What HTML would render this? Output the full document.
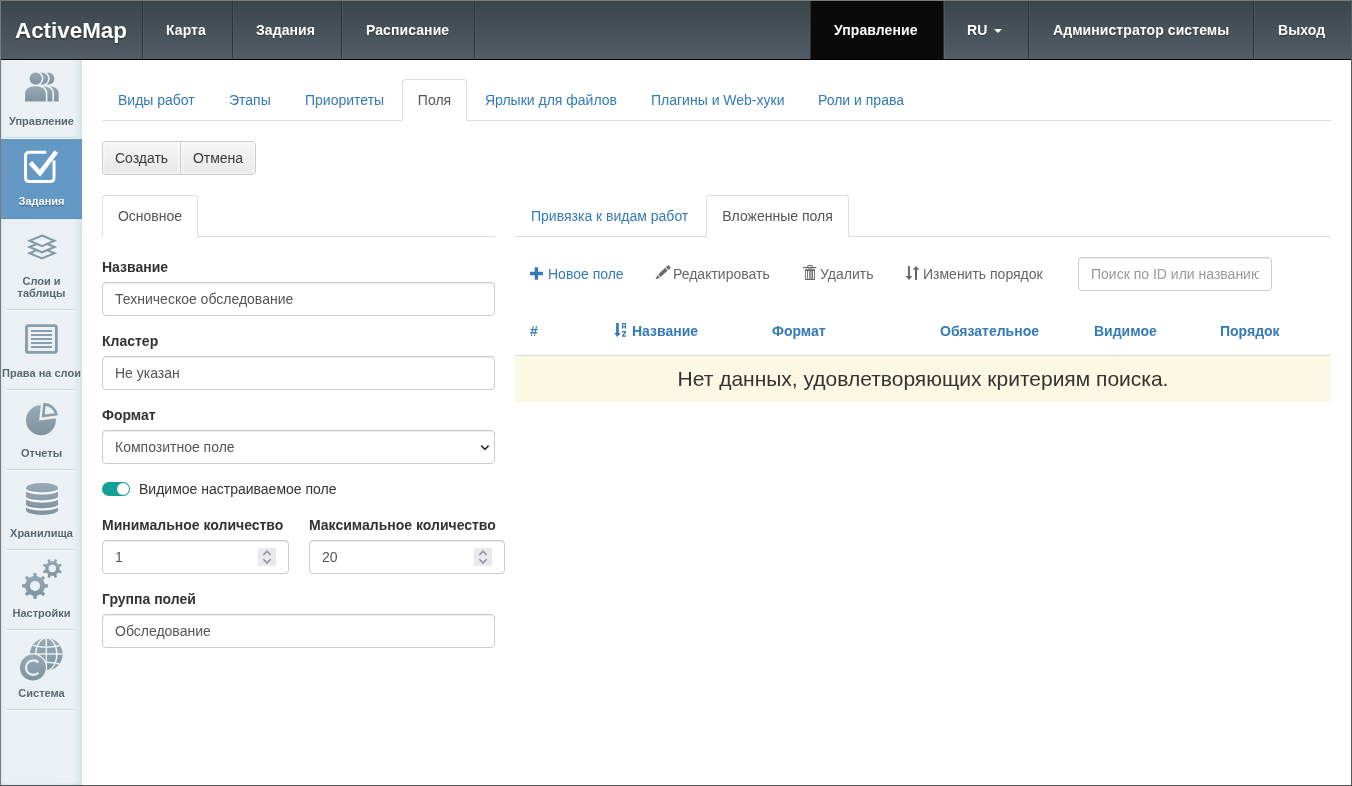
<!DOCTYPE html>
<html><head><meta charset="utf-8">
<style>
*{box-sizing:border-box;margin:0;padding:0}
html,body{width:1352px;height:786px;overflow:hidden;background:#fff}
body{font-family:"Liberation Sans",sans-serif;font-size:14px;color:#333;position:relative;will-change:transform}
.frame{position:absolute;left:0;top:0;width:1352px;height:786px;border-top:1px solid #7a7a7a;border-left:1px solid #7a7a7a;border-right:1px solid #5a5a5a;border-bottom:1px solid #5a5a5a;z-index:50;pointer-events:none}
.abs{position:absolute}
/* navbar */
.nav{position:absolute;left:1px;top:1px;width:1350px;height:59px;background:linear-gradient(#3a454c,#525d65);border-bottom:1px solid #000}
.nav .it{position:absolute;top:0;height:58px;line-height:58px;color:#fff;font-weight:bold;font-size:14px;white-space:nowrap;letter-spacing:0.08px;text-shadow:0 1px 1px rgba(0,0,0,.35)}
.nav .dv{position:absolute;top:0;width:1px;height:58px;background:#2c3439;box-shadow:1px 0 0 rgba(255,255,255,.06)}
.logo{position:absolute;left:14px;top:1px;height:58px;line-height:58px;color:#fff;font-weight:bold;font-size:22.4px;text-shadow:0 1px 2px rgba(0,0,0,.6)}
/* sidebar */
.side{position:absolute;left:1px;top:60px;width:81px;height:726px;background:linear-gradient(90deg,#dfe9ef 0,#eaf0f4 4px,#ebf1f4 72px,#d6e4ec 81px);box-shadow:inset 0 -3px 3px -2px rgba(110,155,190,.35)}
.si{position:absolute;left:1px;width:81px;text-align:center;color:#55656f;font-weight:bold;font-size:11px;line-height:12px}
.sep{position:absolute;left:6px;width:70px;height:1px;background:#c6d6e0;box-shadow:0 1px 0 #fbfcfd}
.si{text-shadow:0 1px 0 #fff}
.si.act{color:#fff;text-shadow:0 1px 1px #2d5a80}
/* content */
.tabs{position:absolute}
.tline{position:absolute;height:1px;background:#ddd}
.tab{position:absolute;color:#337ab7;font-size:14px}
.atab{position:absolute;border:1px solid #ddd;border-bottom-color:#fff;border-radius:4px 4px 0 0;background:#fff;color:#555;text-align:center}
.btn{position:absolute;height:34px;line-height:32px;border:1px solid #ccc;background:linear-gradient(#f6f6f6,#e8e8e8);box-shadow:inset 0 0 4px #fff;color:#3a3a3a;text-align:center;font-size:14px}
.lbl{position:absolute;font-weight:bold;font-size:14px;color:#333}
.inp{position:absolute;height:34px;border:1px solid #ccc;border-radius:4px;background:#fff;color:#555;font-size:14px;line-height:32px;padding-left:12px;box-shadow:inset 0 1px 1px rgba(0,0,0,.075)}
.th{position:absolute;top:322px;color:#337ab7;font-weight:bold;font-size:14px;line-height:18px}
.tool{position:absolute;top:265px;font-size:14px;line-height:18px;color:#666}
</style></head><body>
<div class="frame"></div>

<div class="nav">
  <div class="logo">ActiveMap</div>
  <div class="dv" style="left:141px"></div>
  <div class="it" style="left:165px">Карта</div>
  <div class="dv" style="left:231px"></div>
  <div class="it" style="left:255px">Задания</div>
  <div class="dv" style="left:340px"></div>
  <div class="it" style="left:365px">Расписание</div>
  <div class="dv" style="left:473px"></div>

  <div class="dv" style="left:809px"></div>
  <div class="abs" style="left:810px;top:0;width:132px;height:58px;background:#0a0a0a"></div>
  <div class="it" style="left:833px">Управление</div>
  <div class="dv" style="left:942px"></div>
  <div class="it" style="left:966px">RU <span style="display:inline-block;width:0;height:0;border-left:4px solid transparent;border-right:4px solid transparent;border-top:4px solid #fff;vertical-align:middle;margin-left:3px"></span></div>
  <div class="dv" style="left:1027px"></div>
  <div class="it" style="left:1052px">Администратор системы</div>
  <div class="dv" style="left:1252px"></div>
  <div class="it" style="left:1277px">Выход</div>
</div>

<div class="side"></div>
<div class="sep" style="top:137px"></div>
<div class="abs" style="left:1px;top:139px;width:81px;height:80px;background:#6399c4;border-bottom:1px solid #5a8fba"></div>
<div class="sep" style="top:309px"></div>
<div class="sep" style="top:389px"></div>
<div class="sep" style="top:469px"></div>
<div class="sep" style="top:549px"></div>
<div class="sep" style="top:629px"></div>
<div class="sep" style="top:709px"></div>
<div class="si" style="top:115px">Управление</div>
<div class="si act" style="top:195px">Задания</div>
<div class="si" style="top:275px">Слои и<br>таблицы</div>
<div class="si" style="top:367px">Права на слои</div>
<div class="si" style="top:447px">Отчеты</div>
<div class="si" style="top:527px">Хранилища</div>
<div class="si" style="top:607px">Настройки</div>
<div class="si" style="top:687px">Система</div>
<svg class="abs" style="left:0;top:0" width="90" height="786" viewBox="0 0 90 786">
 <defs><linearGradient id="ig" x1="0" y1="0" x2="0" y2="1"><stop offset="0" stop-color="#97a9b4"/><stop offset="1" stop-color="#7f939f"/></linearGradient></defs>
 <g fill="url(#ig)" stroke="#ebf1f4" stroke-width="1.6">
  <circle cx="48.3" cy="78.6" r="6.9"/>
  <path d="M37.5,102.2 V94 Q37.5,85.5 48.4,85.5 Q59.5,85.5 59.5,94 V102.2 Z"/>
  <circle cx="42" cy="78.6" r="6.9"/>
  <path d="M31.1,102.2 V94 Q31.1,85.5 42.1,85.5 Q53.2,85.5 53.2,94 V102.2 Z"/>
  <circle cx="35.7" cy="78.6" r="6.9"/>
  <path d="M24.3,102.2 V94 Q24.3,85.5 35.4,85.5 Q46.6,85.5 46.6,94 V102.2 Z"/>
 </g>
 <g fill="none" stroke="#fff" stroke-width="3">
  <path d="M46.3,152.2 H29.5 Q25.5,152.2 25.5,156.2 V177.5 Q25.5,181.5 29.5,181.5 H50 Q54,181.5 54,177.5 V160.4"/>
 </g>
 <path d="M30.4,162.6 L40,173.2 L56.3,151.6" fill="none" stroke="#fff" stroke-width="4.6"/>
 <g fill="#ebf1f4" stroke="#8598a5" stroke-width="2.05" stroke-linejoin="miter">
  <path d="M42,247.9 L54.5,253.2 L42,258.5 L29.5,253.2 Z"/>
  <path d="M42,241.7 L54.5,247.0 L42,252.3 L29.5,247.0 Z"/>
  <path d="M42,235.5 L54.5,240.8 L42,246.1 L29.5,240.8 Z"/>
 </g>
 <rect x="26.5" y="325.6" width="29.9" height="26.8" rx="2" fill="none" stroke="#8a9daa" stroke-width="2.9"/>
 <g stroke="#8a9daa" stroke-width="1.8"><path d="M31,331H52M31,335H52M31,339H52M31,343H52M31,347H52"/></g>
 <path d="M39.2,420.5 L55.8,418.2 A15,15 0 1 1 40.8,405.2 Z" fill="url(#ig)"/>
 <path d="M43.2,416 L44.5,404.4 A12.6,12.6 0 0 1 56.4,414.2 Z" fill="none" stroke="#8a9daa" stroke-width="2.6" stroke-linejoin="miter"/>
 <g fill="url(#ig)">
  <path d="M26,488 A16,5 0 0 1 58,488 V510 A16,5 0 0 1 26,510 Z"/>
 </g>
 <g fill="none" stroke="#fbfdfe" stroke-width="2">
  <path d="M26,489.4 A16,4 0 0 0 58,489.4"/>
  <path d="M26,497.4 A16,4 0 0 0 58,497.4"/>
  <path d="M26,505.4 A16,4 0 0 0 58,505.4"/>
 </g>
 <path fill="url(#ig)" fill-rule="evenodd" d="M33.20,576.06 L33.47,572.99 L36.53,572.99 L36.80,576.06 L40.69,577.67 L43.05,575.69 L45.21,577.85 L43.23,580.21 L44.84,584.10 L47.91,584.37 L47.91,587.43 L44.84,587.70 L43.23,591.59 L45.21,593.95 L43.05,596.11 L40.69,594.13 L36.80,595.74 L36.53,598.81 L33.47,598.81 L33.20,595.74 L29.31,594.13 L26.95,596.11 L24.79,593.95 L26.77,591.59 L25.16,587.70 L22.09,587.43 L22.09,584.37 L25.16,584.10 L26.77,580.21 L24.79,577.85 L26.95,575.69 L29.31,577.67 Z M30.00,585.90 a5,5 0 1 0 10.00,0 a5,5 0 1 0 -10.00,0 Z"/>
 <path fill="url(#ig)" fill-rule="evenodd" d="M53.78,561.35 L54.96,559.07 L57.09,559.95 L56.31,562.40 L58.40,564.49 L60.85,563.71 L61.73,565.84 L59.45,567.02 L59.45,569.98 L61.73,571.16 L60.85,573.29 L58.40,572.51 L56.31,574.60 L57.09,577.05 L54.96,577.93 L53.78,575.65 L50.82,575.65 L49.64,577.93 L47.51,577.05 L48.29,574.60 L46.20,572.51 L43.75,573.29 L42.87,571.16 L45.15,569.98 L45.15,567.02 L42.87,565.84 L43.75,563.71 L46.20,564.49 L48.29,562.40 L47.51,559.95 L49.64,559.07 L50.82,561.35 Z M48.60,568.50 a3.7,3.7 0 1 0 7.40,0 a3.7,3.7 0 1 0 -7.40,0 Z"/>
 <circle cx="46.3" cy="654.3" r="16.3" fill="url(#ig)"/>
 <g fill="none" stroke="#ebf1f4" stroke-width="1.5">
  <path d="M46.3,638 V670.6"/>
  <ellipse cx="46.3" cy="654.3" rx="10.5" ry="16.3"/>
  <path d="M30,654 H62.6"/>
  <path d="M33,645.5 Q46.3,649 59.6,645.5"/>
  <path d="M33,664 Q46.3,660.5 59.6,664"/>
 </g>
 <circle cx="32.9" cy="667.6" r="14.2" fill="#ebf1f4"/>
 <circle cx="32.9" cy="667.6" r="13" fill="url(#ig)"/>
 <path d="M38.4,662.4 A7.3,7.3 0 1 0 38.4,672.8" fill="none" stroke="#ebf1f4" stroke-width="2.2"/>
</svg>

<!-- top tabs -->
<div class="tline" style="left:102px;top:120px;width:1229px"></div>
<div class="tab" style="left:118px;top:92px">Виды работ</div>
<div class="tab" style="left:229px;top:92px">Этапы</div>
<div class="tab" style="left:305px;top:92px">Приоритеты</div>
<div class="atab" style="left:402px;top:79px;width:65px;height:42px;line-height:40px">Поля</div>
<div class="tab" style="left:485px;top:92px">Ярлыки для файлов</div>
<div class="tab" style="left:651px;top:92px">Плагины и Web-хуки</div>
<div class="tab" style="left:818px;top:92px">Роли и права</div>

<div class="btn" style="left:102px;top:141px;width:79px;border-radius:4px 0 0 4px">Создать</div>
<div class="btn" style="left:180px;top:141px;width:76px;border-radius:0 4px 4px 0">Отмена</div>

<!-- left sub tabs -->
<div class="tline" style="left:102px;top:236px;width:393px"></div>
<div class="atab" style="left:102px;top:195px;width:96px;height:42px;line-height:40px">Основное</div>

<div class="lbl" style="left:102px;top:259px">Название</div>
<div class="inp" style="left:102px;top:282px;width:393px">Техническое обследование</div>
<div class="lbl" style="left:102px;top:333px">Кластер</div>
<div class="inp" style="left:102px;top:356px;width:393px">Не указан</div>
<div class="lbl" style="left:102px;top:407px">Формат</div>
<div class="inp" style="left:102px;top:430px;width:393px">Композитное поле</div>

<div class="abs" style="left:102px;top:482px;width:28px;height:14px;border-radius:7px;background:#15a096"></div>
<div class="abs" style="left:117px;top:483px;width:12px;height:12px;border-radius:6px;background:#fff"></div>
<div class="abs" style="left:139px;top:481px;color:#333">Видимое настраиваемое поле</div>

<div class="lbl" style="left:102px;top:517px">Минимальное количество</div>
<div class="lbl" style="left:309px;top:517px">Максимальное количество</div>
<div class="inp" style="left:102px;top:540px;width:187px">1</div>
<div class="inp" style="left:309px;top:540px;width:196px">20</div>
<div class="lbl" style="left:102px;top:591px">Группа полей</div>
<div class="inp" style="left:102px;top:614px;width:393px">Обследование</div>

<!-- right -->
<div class="tline" style="left:515px;top:236px;width:816px"></div>
<div class="tab" style="left:531px;top:208px">Привязка к видам работ</div>
<div class="atab" style="left:706px;top:195px;width:143px;height:42px;line-height:40px">Вложенные поля</div>

<div class="tool" style="left:548px;color:#337ab7">Новое поле</div>
<div class="tool" style="left:673px">Редактировать</div>
<div class="tool" style="left:820px">Удалить</div>
<div class="tool" style="left:923px">Изменить порядок</div>
<div class="inp" style="left:1078px;top:257px;width:194px;color:#999"><span style="display:block;width:168px;overflow:hidden;white-space:nowrap">Поиск по ID или названию</span></div>

<div class="th" style="left:530px">#</div>
<div class="th" style="left:632px">Название</div>
<div class="th" style="left:772px">Формат</div>
<div class="th" style="left:940px">Обязательное</div>
<div class="th" style="left:1094px">Видимое</div>
<div class="th" style="left:1220px">Порядок</div>
<div class="abs" style="left:515px;top:355px;width:816px;height:1px;background:#ddd"></div>
<div class="abs" style="left:515px;top:356px;width:816px;height:46px;background:#fcf8e3;text-align:center;font-size:21px;line-height:46px;color:#333">Нет данных, удовлетворяющих критериям поиска.</div>

<svg class="abs" style="left:0;top:0;overflow:visible" width="1" height="1">
 <path d="M481.2,445.6 L484.9,449.3 L488.6,445.6" fill="none" stroke="#333" stroke-width="1.6"/>
 <rect x="258" y="548" width="18" height="18" fill="#e9e9ed"/>
 <path d="M263.3,555 L267,551.3 L270.7,555 M263.3,559.2 L267,562.9 L270.7,559.2" fill="none" stroke="#8a8a99" stroke-width="1.4"/>
 <rect x="474" y="548" width="18" height="18" fill="#e9e9ed"/>
 <path d="M479.3,555 L483,551.3 L486.7,555 M479.3,559.2 L483,562.9 L486.7,559.2" fill="none" stroke="#8a8a99" stroke-width="1.4"/>
 <path d="M530,271.8 H543 V275.2 H530 Z M534.7,267.2 H538.1 V279.8 H534.7 Z" fill="#337ab7"/>
 <g transform="translate(655.6,279.3) rotate(-43)" fill="#6a6a6a">
  <path d="M0,0 L4.2,-1.85 L4.2,1.85 Z"/>
  <rect x="5.2" y="-1.85" width="9.6" height="3.7"/>
  <rect x="15.8" y="-1.85" width="3.2" height="3.7"/>
 </g>
 <g fill="#666">
  <rect x="803.2" y="267" width="13.1" height="1.2"/>
  <rect x="807.7" y="265.5" width="4.6" height="2.5" rx="0.5" fill="none" stroke="#666" stroke-width="1"/>
  <rect x="804.9" y="269.2" width="10.1" height="10.7" rx="0.6"/>
  <rect x="805.8" y="271" width="1.2" height="8" fill="#fff"/>
  <rect x="807.9" y="271" width="1.2" height="8" fill="#fff"/>
  <rect x="809.8" y="271" width="2.2" height="8" fill="#aaa"/>
  <rect x="812.9" y="271" width="1.2" height="8" fill="#fff"/>
 </g>
 <g fill="#666">
  <rect x="908" y="266.1" width="1.9" height="10.5"/>
  <path d="M905.7,276 H912.3 L909,280 Z"/>
  <rect x="915" y="269.3" width="2" height="10.5"/>
  <path d="M912.7,269.8 H919.5 L916,266 Z"/>
 </g>
 <g fill="#337ab7">
  <rect x="616.1" y="323" width="2.7" height="10.5"/>
  <path d="M614.2,333 H620.6 L617.4,337 Z"/>
  <path fill-rule="evenodd" d="M622,323 H626 V328.8 H624.9 V327.4 H623.1 V328.8 H622 Z M623.1,324.2 V326.2 H624.9 V324.2 Z"/>
  <path d="M622,331.1 H626 V332.3 L623.6,335.6 H626 V336.8 H622 V335.6 L624.4,332.3 H622 Z"/>
 </g>
</svg>
</body></html>
